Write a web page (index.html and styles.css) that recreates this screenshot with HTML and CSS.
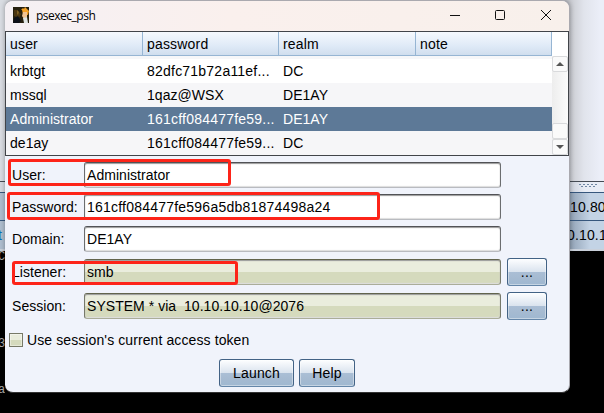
FILE: index.html
```html
<!DOCTYPE html>
<html lang="en">
<head>
<meta charset="utf-8">
<title>psexec_psh</title>
<link rel="stylesheet" href="styles.css">
</head>
<body>
<div class="desktop">
  <div class="upper"></div>
  <div class="splitter"><svg width="20" height="4" viewBox="0 0 20 4"><path d="M1 .5h18M3 2.5h16" stroke="#6f87a3" stroke-dasharray="2 2"/></svg></div>
  <div class="host"><span></span><span>10.80</span></div>
  <div class="host second"><span class="blue">t</span><span>0.10.1</span></div>
  <div class="console"><span class="c1">C</span><span class="c2">3</span><span class="c3">a</span></div>
</div>
<main class="window">
  <header class="title">
    <svg class="logo" width="16" height="16" viewBox="0 0 16 16"><path fill="#26200f" d="M0 0h16v16H0z"/><path fill="#4b3611" d="M1 3h3l4 4-2 4-5-2z"/><path fill="#806022" d="M4 3l2 2-1 3-1-1z"/><path fill="#f4a126" d="M8 3l2-2 1 1 1-2 4 4-1 4-5-1-1-4z"/><path fill="#f0c393" d="M10 5h4v5l-3 2-2-3z"/><path fill="#dfe5e4" d="M10 11l4-1 1 6h-4z"/><path fill="#0c1018" d="M1 11l4-2 3 5-2 2H0z"/></svg>
    <span class="name">psexec_psh</span>
    <svg class="controls" width="104" height="14" viewBox="0 0 104 14" fill="none" stroke="#111"><path d="M0 7.5h10"/><rect x="45.5" y="2.5" width="9" height="9" rx="1"/><path d="M91 2l10 10M101 2L91 12"/></svg>
  </header>
  <section class="table">
    <div class="grid head"><span>user</span><span>password</span><span>realm</span><span>note</span></div>
    <div class="scroll">
      <div class="rows">
        <div class="grid row white"><span>krbtgt</span><span class="hash">82dfc71b72a11ef...</span><span>DC</span><span></span></div>
        <div class="grid row"><span>mssql</span><span>1qaz@WSX</span><span>DE1AY</span><span></span></div>
        <div class="grid row selected"><span>Administrator</span><span class="hash">161cff084477fe59...</span><span>DE1AY</span><span></span></div>
        <div class="grid row"><span>de1ay</span><span class="hash">161cff084477fe59...</span><span>DC</span><span></span></div>
      </div>
      <div class="bar">
        <div class="knob"><svg width="8" height="4" viewBox="0 0 8 4"><path d="M0 4h8L4 0z" fill="#555"/></svg></div>
        <div class="track"></div>
        <div class="knob thumb"></div>
        <div class="knob"><svg width="8" height="4" viewBox="0 0 8 4"><path d="M0 0h8L4 4z" fill="#555"/></svg></div>
      </div>
    </div>
  </section>
  <form class="form">
    <div class="field"><label>User:</label><div class="input">Administrator</div></div>
    <div class="field"><label>Password:</label><div class="input hash">161cff084477fe596a5db81874498a24</div></div>
    <div class="field"><label>Domain:</label><div class="input">DE1AY</div></div>
    <div class="field tall"><label>Listener:</label><div class="input locked">smb</div><button type="button" class="button">...</button></div>
    <div class="field tall"><label>Session:</label><div class="input locked">SYSTEM * via&nbsp; 10.10.10.10@2076</div><button type="button" class="button">...</button></div>
    <div class="check"><i></i><span>Use session's current access token</span></div>
    <div class="actions"><button type="button" class="button launch">Launch</button><button type="button" class="button help">Help</button></div>
  </form>
</main>
<div class="mark m1"></div><div class="mark m2"></div><div class="mark m3"></div>
</body>
</html>
```
FILE: styles.css
```css
* { box-sizing: border-box; }
body { margin: 0; width: 604px; height: 413px; overflow: hidden; position: relative; background: #000; color: #000; font: 14px/24px "Liberation Sans", Arial, sans-serif; letter-spacing: .04px; }
.desktop { width: 604px; height: 413px; }
.upper { height: 181px; background: linear-gradient(90deg, #d9dce2 0 5px, #bfc1c7 566px, #d0d2d8 574px, #e1e4ec 584px, #ebeef8 600px); }
.splitter { height: 11px; border-top: 1px solid #454b54; background: linear-gradient(90deg, #d3d7df 0 5px, #c9ced8 569px, #e8edf6 585px); display: flex; justify-content: flex-end; padding: 2px 6px 0 0; }
.splitter svg { display: block; }
.host { height: 28px; border-top: 1px solid #36577d; background: linear-gradient(90deg, #aebdce 0 5px, #8fa0b3 569px, #c3d3e5 590px); display: flex; justify-content: space-between; line-height: 29px; }
.host span:first-child { width: 5px; overflow: hidden; }
.host span:last-child { width: 34px; white-space: nowrap; letter-spacing: .15px; }
.host.second { height: 31px; border-bottom: 2px solid #c9d0da; }
.host.second span:last-child { width: 37px; }
.host .blue { color: #0b6fb8; text-indent: -2px; }
.console { height: 162px; background: #000; color: #aaa; font: 12px/12px "Liberation Mono", monospace; display: flex; flex-direction: column; width: 5px; overflow: hidden; }
.console span { text-indent: -2px; }
.c2 { margin-top: 75px; }
.c3 { margin-top: 34px; }
.window { position: absolute; left: 5px; top: 0; width: 565px; height: 393px; border: 1px solid #aaa9af; border-left: 0; border-bottom-color: #333; border-radius: 8px; background: #f0f3fb; overflow: hidden; box-shadow: 0 0 5px #0005; }
.title { height: 30px; background: linear-gradient(90deg, #f5f0f4, #faf0ed 40%, #f8f0eb); display: flex; align-items: center; padding: 0 15px 0 8px; }
.logo { position: relative; top: -1px; }
.name { font: 12px/16px "Open Sans", sans-serif; letter-spacing: -.5px; margin-left: 7px; flex: 1; }
.controls { position: relative; top: -1px; }
.table { height: 125px; border: 1px solid #414449; background: #fff; }
.grid { display: grid; grid-template-columns: 137px 136px 137px 136px; width: 546px; white-space: nowrap; }
.grid span { padding-left: 4px; overflow: hidden; }
.head { height: 24px; background: linear-gradient(#f5f9fe, #dfeaf7 60%, #d0deee); border-bottom: 1px solid #96b5d3; letter-spacing: .18px; }
.head span { border-right: 1px solid #96b5d3; }
.scroll { display: flex; height: 99px; }
.rows { width: 546px; padding-top: 3px; background: #f6f7f9; }
.row { height: 24px; background: #f6f6f8; }
.row.white { background: #fff; }
.row.selected { background: #5d7997; color: #fff; }
.hash { letter-spacing: .22px; }
.bar { width: 16px; display: flex; flex-direction: column; background: linear-gradient(90deg, #ededed, #fcfcfc); }
.track { flex: 1; }
.knob { height: 16px; border: 1px solid #d9dadc; border-radius: 2px; background: #fafafa; display: flex; align-items: center; justify-content: center; }
.form { display: flex; flex-direction: column; padding-top: 6px; }
.field { height: 32px; padding-left: 7px; display: flex; align-items: flex-start; line-height: 25px; }
.field label { width: 72px; padding-top: 1px; }
.input { width: 417px; height: 26px; padding-left: 2px; border: 1px solid #6b6d6f; border-top-color: #515256; border-bottom-color: #b9bbc0; border-radius: 3px; background: #fff; box-shadow: inset 0 1px 1px #999, inset 0 -1px 1px #ddd; white-space: nowrap; }
.tall { height: 34px; padding-top: 1px; }
.locked { background: linear-gradient(#eaeddd 0 50%, #d5dabd 50% 100%); border-color: #62644d #77796a #aaad99; }
.button { height: 28px; padding: 0; color: #000; font: inherit; letter-spacing: .2px; border: 1px solid #426285; border-bottom-color: #6486a9; border-radius: 3px; background: linear-gradient(#fdfeff, #dae3ee 49%, #aabed5 51%, #a5bad1 75%, #9fb8d1); box-shadow: inset 0 0 0 1px #ffffff66; }
.tall .button { width: 40px; margin: -1px 0 0 6px; }
.check { height: 26px; margin-top: 7px; padding-left: 4px; display: flex; align-items: flex-start; line-height: 15px; letter-spacing: .1px; }
.check i { width: 14px; height: 14px; margin-right: 4px; border: 1px solid #777967; background: linear-gradient(#e9ecdc 0 50%, #d5dabd 50%); box-shadow: inset 0 0 0 1px #fff6; }
.actions { display: flex; gap: 5px; padding-left: 214px; }
.launch { width: 75px; }
.help { width: 56px; }
.mark { position: absolute; border: 3px solid #fd2419; border-radius: 3px; }
.m1 { left: 8px; top: 159px; width: 223px; height: 27px; }
.m2 { left: 7px; top: 192px; width: 373px; height: 28px; }
.m3 { left: 12px; top: 261px; width: 226px; height: 24px; }
```
